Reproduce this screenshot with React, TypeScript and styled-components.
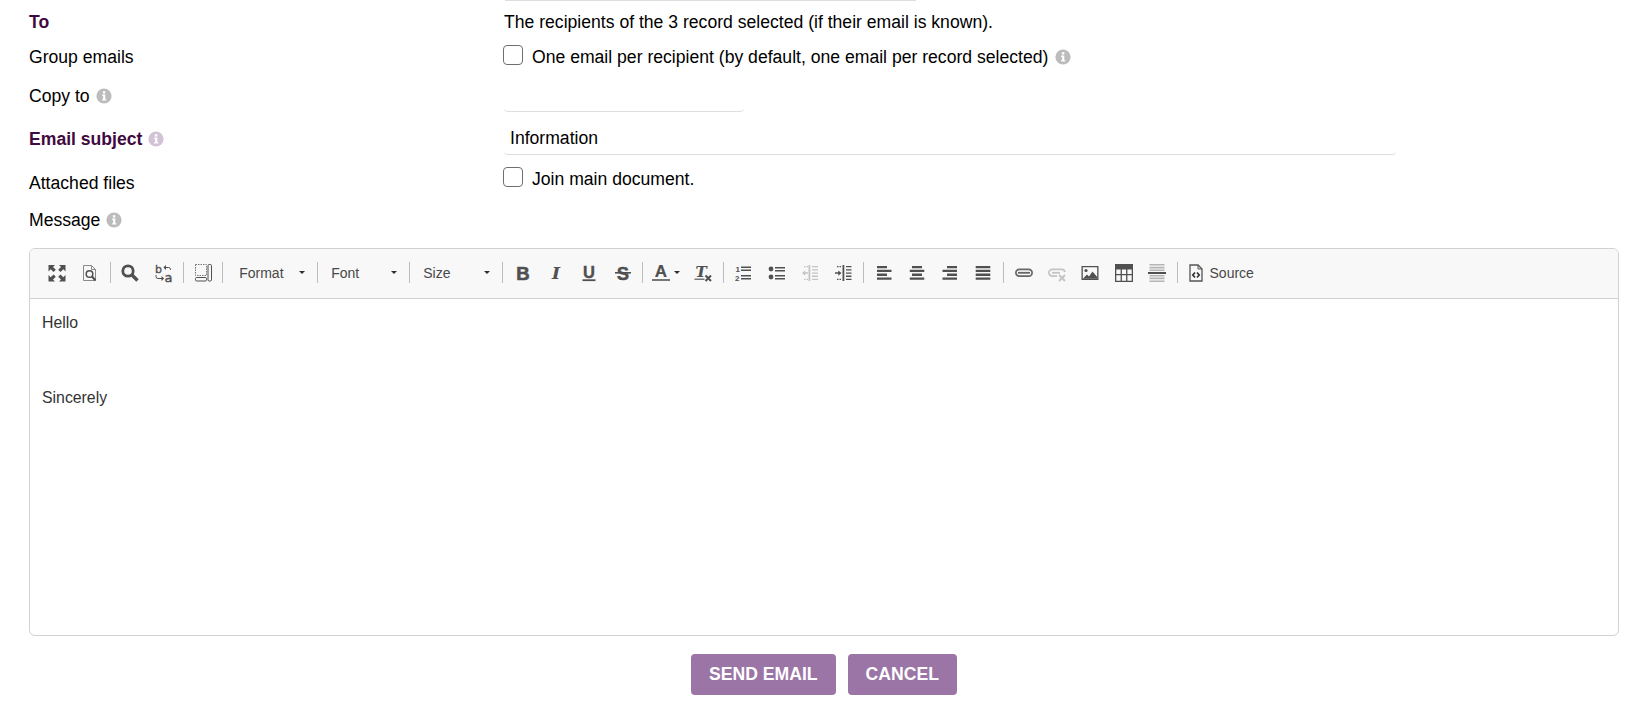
import React from "react";
import styled, { createGlobalStyle } from "styled-components";

const Global = createGlobalStyle`
  html, body { margin: 0; padding: 0; background: #fff; }
  body { font-family: "Liberation Sans", Arial, sans-serif; font-size: 17.6px; color: #000; }
`;

const Page = styled.div`
  width: 1639px;
  height: 715px;
  overflow: hidden;
  padding: 0 20px 0 29px;
  box-sizing: border-box;
`;
const TopRule = styled.div`
  margin-left: 476px;
  width: 411px;
  height: 1px;
  background: #ddd;
`;
const Row = styled.div<{ $h: number }>`
  display: grid;
  grid-template-columns: 475px 1fr;
  align-items: center;
  height: ${(p) => p.$h}px;
`;
const Label = styled.div<{ $required?: boolean; $shift?: number }>`
  display: flex;
  align-items: center;
  gap: 6px;
  line-height: 20px;
  margin-top: ${(p) => p.$shift ?? 0}px;
  font-weight: ${(p) => (p.$required ? 700 : 400)};
  color: ${(p) => (p.$required ? "#3f0a3f" : "#000")};
`;
const Value = styled.div<{ $shift?: number }>`
  display: flex;
  align-items: center;
  line-height: 20px;
  margin-top: ${(p) => p.$shift ?? 0}px;
`;
const Check = styled.input.attrs({ type: "checkbox" })`
  appearance: none;
  width: 20px;
  height: 20px;
  margin: 0 9px 0 -1px;
  border: 1px solid #6f6f6f;
  border-radius: 4px;
  background: #fff;
  box-sizing: border-box;
  flex: none;
  position: relative;
  top: -2px;
`;
const Field = styled.input.attrs({ type: "text", readOnly: true })<{ $w: number }>`
  width: ${(p) => p.$w}px;
  height: 32px;
  padding: 0 6px 1px;
  box-sizing: border-box;
  border: none;
  border-bottom: 1px solid #ddd;
  border-radius: 0 0 4px 4px;
  outline: none;
  background: transparent;
  font: 17.6px "Liberation Sans", Arial, sans-serif;
  color: #000;
`;
const InfoSvg = styled.svg<{ $soft?: boolean }>`
  width: 16px;
  height: 16px;
  flex: none;
  color: ${(p) => (p.$soft ? "#d2c4d6" : "#bcbcbc")};
`;
const Info = ({ soft, className }: { soft?: boolean; className?: string }) => (
  <InfoSvg $soft={soft} className={className} viewBox="0 0 16 16">
    <circle cx="8" cy="8" r="7.6" fill="currentColor" />
    <rect x="6.9" y="3.2" width="2.4" height="2.3" fill="#fff" />
    <path d="M6.2 6.6h3.1v4.6h1v1.3H6.1v-1.3h1V7.9h-.9z" fill="#fff" />
  </InfoSvg>
);
const TrailingInfo = styled(Info)`
  margin-left: 7px;
`;

const Editor = styled.section`
  margin-top: 15px;
  height: 388px;
  border: 1px solid #d1d1d1;
  border-radius: 6px;
  overflow: hidden;
  box-sizing: border-box;
  display: flex;
  flex-direction: column;
`;
const Toolbar = styled.div`
  height: 50px;
  flex: none;
  box-sizing: border-box;
  background: #f8f8f8;
  border-bottom: 1px solid #d1d1d1;
  display: flex;
  align-items: center;
  padding: 0 0 2px 10px;
  color: #505050;
`;
const Sep = styled.span`
  width: 1px;
  height: 21px;
  background: #bcbcbc;
  margin: 0 3px;
  flex: none;
`;
const ToolBtn = styled.span<{ $off?: boolean; $w?: number }>`
  width: ${(p) => p.$w ?? 33.3}px;
  height: 30px;
  flex: none;
  display: flex;
  align-items: center;
  justify-content: center;
  gap: 4px;
  opacity: ${(p) => (p.$off ? 0.3 : 1)};
`;
const Glyph = styled.svg`
  width: 18px;
  height: 18px;
  flex: none;
  fill: currentColor;
  overflow: visible;
`;
const Combo = styled.span<{ $w: number; $lead: number }>`
  width: ${(p) => p.$w}px;
  height: 30px;
  flex: none;
  box-sizing: border-box;
  padding: 0 9px 0 ${(p) => p.$lead}px;
  display: flex;
  align-items: center;
  justify-content: space-between;
  font-size: 14px;
  color: #484848;
`;
const Caret = styled.i`
  width: 0;
  height: 0;
  border-left: 3px solid transparent;
  border-right: 3px solid transparent;
  border-top: 3px solid #2f2f2f;
  flex: none;
`;
const SourceBtn = styled.span`
  display: flex;
  align-items: center;
  gap: 5px;
  margin-left: 6px;
  font-size: 14px;
  color: #484848;
`;
const Body = styled.div`
  flex: 1;
  padding: 11px 12px;
  color: #333;
  font-size: 15.84px;
  line-height: 25px;
`;
const Para = styled.p<{ $gap?: number }>`
  margin: 0 0 ${(p) => p.$gap ?? 0}px;
`;
const Actions = styled.div`
  display: flex;
  justify-content: center;
  gap: 12px;
  margin-top: 18px;
`;
const Action = styled.button`
  height: 41px;
  padding: 0 18px;
  border: none;
  border-radius: 4px;
  background: #9b75a6;
  color: #fff;
  font: 700 17.6px "Liberation Sans", Arial, sans-serif;
  text-transform: uppercase;
`;

type G = { children: React.ReactNode };
const I = ({ children }: G) => <Glyph viewBox="0 0 18 18">{children}</Glyph>;
const LT = styled.text<{ $f: string; $w?: number; $s?: string; $t?: number }>`
  font-family: ${(p) => p.$f};
  font-weight: ${(p) => p.$w ?? 700};
  font-style: ${(p) => p.$s ?? "normal"};
  stroke: currentColor;
  stroke-width: ${(p) => p.$t ?? 0}px;
`;
const sans = '"Liberation Sans", sans-serif';
const djserif = '"DejaVu Serif", serif';
const djs = '"DejaVu Sans", sans-serif';

const icons: Record<string, React.ReactNode> = {
  maximize: (
    <>
      <path d="M0.500 1h6.500L5 3l2.800 2.800L5.500 8.100 2.700 5.300 0.500 7.500z" />
      <path d="M17.500 1H11l2 2-2.800 2.800 2.300 2.300 2.800-2.800 2.200 2.200z" />
      <path d="M0.500 17.500H7L5 15.500l2.800-2.800-2.300-2.300-2.800 2.800L0.500 11z" />
      <path d="M17.500 17.500H11l2-2-2.800-2.800 2.300-2.300 2.800 2.800 2.200-2.200z" />
    </>
  ),
  preview: (
    <>
      <path d="M2.500 1.500h8l4 4v11h-12z" fill="none" stroke="#8a8a8a" strokeWidth="1" />
      <path d="M10.500 1.500v4h4" fill="none" stroke="#8a8a8a" strokeWidth="1" />
      <circle cx="8.500" cy="10" r="3.300" fill="none" stroke="#505050" strokeWidth="1.500" />
      <path d="M11 12.500l3.500 4" stroke="#505050" strokeWidth="2" />
    </>
  ),
  find: (
    <>
      <circle cx="7" cy="7" r="5.200" fill="none" stroke="currentColor" strokeWidth="2.800" />
      <path d="M10.500 10.500l6 6" stroke="currentColor" strokeWidth="3.400" />
    </>
  ),
  replace: (
    <>
      <LT $f={djs} $w={400} $t={0.3} x="0" y="9" fontSize="11">b</LT>
      <LT $f={djs} $w={400} $t={0.4} x="9.500" y="17.800" fontSize="13">a</LT>
      <path d="M9 3.500h4.500a2 2 0 0 1 2 2v.5" fill="none" stroke="currentColor" />
      <path d="M11 1l-2.600 2.500L11 6z" />
      <path d="M1 11v1.500a2 2 0 0 0 2 2h4" fill="none" stroke="currentColor" />
      <path d="M6.500 12l2.600 2.500L6.500 17z" />
    </>
  ),
  blocks: (
    <>
      <path d="M1.500 0.500h11v11h-11z" fill="none" stroke="#777" strokeDasharray="1.500 1" />
      <rect x="1.500" y="13.500" width="11" height="3.500" rx="1.200" fill="none" stroke="#505050" />
      <rect x="14" y="0.500" width="3.500" height="16.500" rx="1.200" fill="none" stroke="#505050" />
    </>
  ),
  bold: <LT $f={sans} $t={0.6} x="9" y="15.500" fontSize="18.500" textAnchor="middle">B</LT>,
  italic: <LT $f={djserif} $s="italic" $t={0.2} x="9" y="15" fontSize="17" textAnchor="middle">I</LT>,
  underline: (
    <>
      <LT $f={sans} $t={0.4} x="9" y="13.500" fontSize="16.500" textAnchor="middle">U</LT>
      <rect x="2.500" y="15.300" width="13" height="1.800" />
    </>
  ),
  strike: (
    <>
      <LT $f={sans} $t={0.4} x="9" y="15.500" fontSize="18.500" textAnchor="middle">S</LT>
      <rect x="1" y="8" width="16" height="1.600" />
    </>
  ),
  color: (
    <>
      <LT $f={sans} $t={0.2} x="9" y="13" fontSize="17" textAnchor="middle">A</LT>
      <rect x="0" y="15" width="18" height="2" fill="#777" />
    </>
  ),
  clear: (
    <>
      <LT $f={djserif} $s="italic" $t={0.2} x="7" y="12.500" fontSize="15" textAnchor="middle">T</LT>
      <rect x="0.500" y="14.500" width="10" height="1.500" fill="#777" />
      <path d="M11.500 11.500l5.500 5.500M17 11.500L11.500 17" stroke="currentColor" strokeWidth="2" />
    </>
  ),
  ol: (
    <>
      <LT $f={sans} x="1.500" y="8" fontSize="8">1</LT>
      <LT $f={sans} x="1" y="16.500" fontSize="8">2</LT>
      <path d="M7 2.500h10V4H7zM7 5.500h10V7H7zM7 11h10v1.500H7zM7 14h10v1.500H7z" />
    </>
  ),
  ul: (
    <>
      <circle cx="3" cy="5" r="2.400" />
      <circle cx="3" cy="13" r="2.400" />
      <path d="M7 3h10v1.600H7zM7 6h10v1.600H7zM7 11h10v1.600H7zM7 14h10v1.600H7z" />
    </>
  ),
  outdent: (
    <>
      <path d="M7.500 1h1.800v16H7.500z" />
      <path d="M11 2h6v1.300h-6zM11 5.200h6v1.300h-6zM11 8.400h6v1.300h-6zM11 11.600h6v1.300h-6zM11 14.800h6v1.300h-6z" />
      <path d="M3 2h1.500v1.300H3zM5.500 2H7v1.300H5.500zM3 14.800h1.500v1.300H3zM5.500 14.800H7v1.300H5.500z" />
      <path d="M1 9l3.200-2.600v1.900H7v1.500H4.200v1.900z" />
    </>
  ),
  indent: (
    <>
      <path d="M8.500 1h1.800v16H8.500z" />
      <path d="M12 2h5.500v1.300H12zM12 5.200h5.500v1.300H12zM12 8.400h5.500v1.300H12zM12 11.600h5.500v1.300H12zM12 14.800h5.500v1.300H12z" />
      <path d="M3 2h1.500v1.300H3zM5.500 2H7v1.300H5.500zM3 14.800h1.500v1.300H3zM5.500 14.800H7v1.300H5.500z" />
      <path d="M7.500 9L4.300 6.400v1.900H1v1.500h3.300v1.900z" />
    </>
  ),
  left: <path d="M2 2h10v2.300H2zM2 5.800h14.500v2.300H2zM2 9.600h10v2.300H2zM2 13.400h14.500v2.300H2z" />,
  center: <path d="M4 2h10v2.300H4zM1.800 5.800h14.500v2.300H1.800zM4 9.600h10v2.300H4zM1.800 13.400h14.500v2.300H1.800z" />,
  right: <path d="M6 2h10v2.300H6zM1.500 5.800H16v2.300H1.500zM6 9.600h10v2.300H6zM1.500 13.400H16v2.300H1.500z" />,
  justify: <path d="M1.700 2h14.600v2.300H1.700zM1.700 5.800h14.600v2.300H1.700zM1.700 9.600h14.600v2.300H1.700zM1.700 13.400h14.600v2.300H1.700z" />,
  link: (
    <>
      <rect x="0.900" y="5.400" width="16.200" height="6.800" rx="3.400" fill="none" stroke="#666" strokeWidth="1.700" />
      <rect x="3" y="7.900" width="12" height="1.800" fill="#666" />
    </>
  ),
  unlink: (
    <>
      <path d="M9 12.200H4.300a3.400 3.400 0 0 1 0-6.800h9.400a3.400 3.400 0 0 1 3.300 2.600" fill="none" stroke="currentColor" strokeWidth="1.700" />
      <rect x="4" y="7.900" width="8" height="1.800" />
      <path d="M11 11l6 6M17 11l-6 6" stroke="currentColor" strokeWidth="2" />
    </>
  ),
  image: (
    <>
      <path fillRule="evenodd" d="M0.500 2h17v14h-17zM1.800 3.300v11.400h14.400V3.300z" />
      <circle cx="5" cy="6.500" r="1.600" />
      <path d="M1.800 14.700l4.200-4.200 2 2 3.500-5 4.700 5.500v1.700z" />
    </>
  ),
  table: (
    <>
      <rect x="0" y="0" width="18" height="4.500" />
      <path fillRule="evenodd" d="M0 4h18v14H0zM1.300 5.500V10h4.300V5.500zM6.900 5.500V10h4.200V5.500zM12.400 5.500V10h4.300V5.500zM1.300 11.300v5.400h4.300v-5.400zM6.900 11.300v5.400h4.200v-5.400zM12.400 11.300v5.400h4.300v-5.400z" />
    </>
  ),
  hr: (
    <>
      <path d="M1.500 0h15v1.600h-15zM1.500 2.800h15v1.600h-15zM1.500 5.500h15V7h-15zM1.500 11h15v1.500h-15zM1.500 13.600h15v1.600h-15zM1.500 16.400h15V18h-15z" fill="#b4b4b4" />
      <path d="M0 8h18v2H0z" />
    </>
  ),
  source: (
    <>
      <path d="M3 1h8l4 4v12H3z" fill="none" stroke="#555" strokeWidth="1.300" />
      <path d="M11 1v4h4" fill="none" stroke="#555" strokeWidth="1" />
      <path d="M8 8.500L5.800 11 8 13.500M10 8.500l2.200 2.500-2.200 2.500" fill="none" stroke="#333" strokeWidth="1.700" />
    </>
  ),
};

const Tool = ({ name, off, w }: { name: string; off?: boolean; w?: number }) => (
  <ToolBtn $off={off} $w={w}>
    <I>{icons[name]}</I>
  </ToolBtn>
);

export default function App() {
  return (
    <>
      <Global />
      <Page>
        <TopRule />
        <Row $h={42}>
          <Label $required>To</Label>
          <Value>The recipients of the 3 record selected (if their email is known).</Value>
        </Row>
        <Row $h={28}>
          <Label>Group emails</Label>
          <Value>
            <Check />
            One email per recipient (by default, one email per record selected)
            <TrailingInfo />
          </Value>
        </Row>
        <Row $h={50}>
          <Label>
            Copy to <Info />
          </Label>
          <Value>
            <Field $w={240} defaultValue="" />
          </Value>
        </Row>
        <Row $h={36}>
          <Label $required>
            Email subject <Info soft />
          </Label>
          <Value>
            <Field $w={892} defaultValue="Information" />
          </Value>
        </Row>
        <Row $h={50}>
          <Label $shift={1}>Attached files</Label>
          <Value $shift={-7}>
            <Check />
            Join main document.
          </Value>
        </Row>
        <Row $h={26}>
          <Label>
            Message <Info />
          </Label>
          <span />
        </Row>
        <Editor>
          <Toolbar>
            <Tool name="maximize" />
            <Tool name="preview" />
            <Sep />
            <Tool name="find" />
            <Tool name="replace" />
            <Sep />
            <Tool name="blocks" w={32} />
            <Sep />
            <Combo $w={88} $lead={13}>
              Format
              <Caret />
            </Combo>
            <Sep />
            <Combo $w={85} $lead={10}>
              Font
              <Caret />
            </Combo>
            <Sep />
            <Combo $w={86} $lead={10}>
              Size
              <Caret />
            </Combo>
            <Sep />
            <Tool name="bold" />
            <Tool name="italic" />
            <Tool name="underline" />
            <Tool name="strike" />
            <Sep />
            <ToolBtn $w={40}>
              <I>{icons.color}</I>
              <Caret />
            </ToolBtn>
            <Tool name="clear" />
            <Sep />
            <Tool name="ol" />
            <Tool name="ul" />
            <Tool name="outdent" off />
            <Tool name="indent" />
            <Sep />
            <Tool name="left" />
            <Tool name="center" />
            <Tool name="right" />
            <Tool name="justify" />
            <Sep />
            <Tool name="link" />
            <Tool name="unlink" off />
            <Tool name="image" />
            <Tool name="table" />
            <Tool name="hr" />
            <Sep />
            <SourceBtn>
              <I>{icons.source}</I>
              Source
            </SourceBtn>
          </Toolbar>
          <Body>
            <Para $gap={50}>Hello</Para>
            <Para>Sincerely</Para>
          </Body>
        </Editor>
        <Actions>
          <Action>Send email</Action>
          <Action>Cancel</Action>
        </Actions>
      </Page>
    </>
  );
}
